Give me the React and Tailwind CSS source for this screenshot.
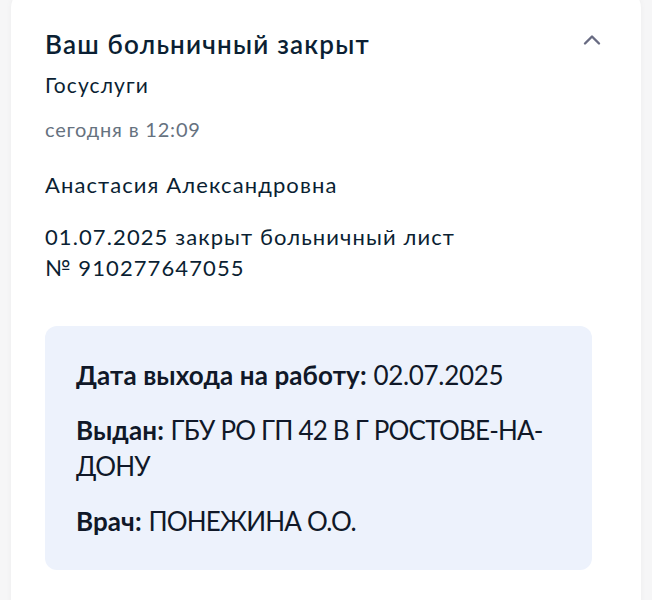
import React from "react";

const ChevronUp = () => (
  <svg width="18" height="12" viewBox="0 0 18 12" fill="none">
    <path d="M2 9.5L9 2.5L16 9.5" stroke="#686b82" strokeWidth="2.4" strokeLinecap="round" strokeLinejoin="round" />
  </svg>
);

const Row = ({ label, children, tight }) => (
  <p className="text-[26px] leading-[36px] text-[#101828]">
    <span className="font-bold tracking-[0.1px]">{label}</span>{" "}
    <span className={tight ? "tracking-[-0.8px]" : "tracking-[-0.3px]"}>{children}</span>
  </p>
);

const App = () => {
  return (
    <div className="min-h-[600px] bg-[#f6f6f7] px-[11px] overflow-hidden font-['Lato','Noto_Sans',sans-serif]">
      <div className="-mt-[12px] bg-white rounded-[20px] shadow-[0_0_6px_rgba(0,0,0,0.04)] pt-[40px] pl-[34px] pr-[49px] pb-[40px] min-h-[640px]">
        {/* HEADER */}
        <div className="flex items-start justify-between">
          <h2 className="text-[26px] leading-[32px] tracking-[1.2px] font-semibold text-[#0b1f33]">
            Ваш больничный закрыт
          </h2>
          <div className="mt-[6px] mr-[-9px]">
            <ChevronUp />
          </div>
        </div>
        <p className="mt-[11px] text-[21px] leading-[28px] tracking-[1.1px] text-[#0b1f33]">Госуслуги</p>
        <p className="mt-[16px] text-[20px] leading-[28px] tracking-[0.8px] text-[#66727f]">сегодня в 12:09</p>

        <p className="mt-[26px] text-[22px] leading-[31px] tracking-[1.1px] text-[#0b1f33]">
          Анастасия Александровна
        </p>
        <p className="mt-[21px] text-[22px] leading-[31px] tracking-[1.1px] text-[#0b1f33]">
          01.07.2025 закрыт больничный лист
          <br />
          № 910277647055
        </p>

        {/* DETAILS */}
        <div className="mt-[43px] bg-[#edf2fc] rounded-[12px] pl-[31px] pr-[20px] pt-[31px] pb-[31px] flex flex-col gap-[19px]">
          <Row label="Дата выхода на работу:">02.07.2025</Row>
          <Row label="Выдан:" tight>ГБУ РО ГП 42 В Г РОСТОВЕ-НА-ДОНУ</Row>
          <Row label="Врач:" tight>ПОНЕЖИНА О.О.</Row>
        </div>
      </div>
    </div>
  );
};

export default App;
